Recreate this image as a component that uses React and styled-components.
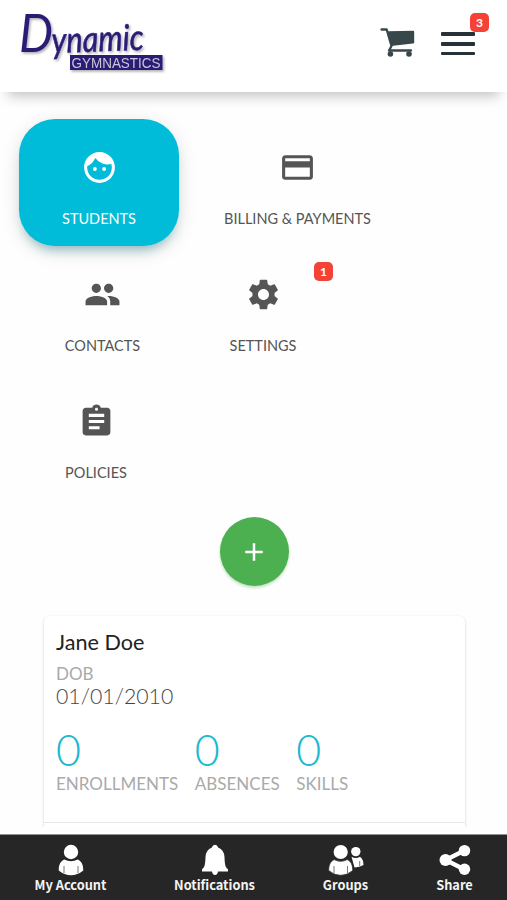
import React, { useState } from 'react';
import styled, { createGlobalStyle } from 'styled-components';
import { MdFace, MdPayment, MdPeople, MdSettings, MdAssignment, MdAdd } from 'react-icons/md';

const GlobalStyle = createGlobalStyle`
  * {
    box-sizing: border-box;
  }
  body {
    margin: 0;
    background-color: #fefefe;
    font-family: Lato, 'Open Sans', sans-serif;
  }
  button {
    padding: 0;
    border: none;
    background: none;
    font: inherit;
    color: inherit;
    cursor: pointer;
  }
  svg {
    display: block;
  }
`;

const Page = styled.div`
  display: flex;
  flex-direction: column;
  height: 900px;
  overflow: hidden;
`;

const Header = styled.header`
  position: relative;
  flex: 0 0 92px;
  display: flex;
  justify-content: space-between;
  align-items: flex-start;
  padding: 10px 32px 0 16px;
  background-color: #fff;
  box-shadow: 0 12px 12px -8px rgba(0, 0, 0, 0.24);
`;

const HeaderActions = styled.div`
  display: flex;
  align-items: flex-start;
  gap: 26px;
  padding-top: 17px;
`;

const MenuButton = styled.button`
  position: relative;
  display: flex;
  flex-direction: column;
  gap: 6px;
  width: 34px;
  padding-top: 5px;
  span {
    height: 3.8px;
    border-radius: 1px;
    background-color: #263238;
  }
`;

const Badge = styled.b`
  position: absolute;
  top: ${props => props.$top}px;
  right: ${props => props.$right}px;
  width: 19px;
  height: 19px;
  border-radius: 5px;
  background-color: #f44336;
  color: #fff;
  font-size: 12px;
  font-weight: 700;
  line-height: 19px;
  text-align: center;
`;

const Content = styled.main`
  flex: 0 0 735px;
  display: flex;
  flex-direction: column;
  padding-top: 27px;
  overflow: hidden;
`;

const Tabs = styled.nav`
  display: flex;
  flex-wrap: wrap;
  width: 420px;
  margin-left: 19px;
`;

const Tab = styled.button`
  position: relative;
  display: flex;
  flex-direction: column;
  align-items: center;
  width: ${props => props.$width}px;
  height: 127px;
  padding-top: 30px;
  border-radius: 36px;
  font-size: 14.5px;
  line-height: 20px;
  white-space: nowrap;
  color: ${props => (props.$active ? '#fff' : '#555')};
  ${props => props.$active && `
    background-color: #00bcd8;
    box-shadow: 0 5px 20px -1px rgba(0, 0, 0, 0.14), 0 9px 12px -6px rgba(0, 120, 140, 0.4);
  `}
  svg {
    width: 37px;
    height: 37px;
    margin-bottom: 23px;
  }
`;

const AddButton = styled.button`
  display: flex;
  align-items: center;
  justify-content: center;
  flex: 0 0 69px;
  width: 69px;
  margin: 17px 0 0 219.5px;
  border-radius: 50%;
  background-color: #4caf50;
  color: #fff;
  box-shadow: 0 2px 3px rgba(76, 175, 80, 0.35);
`;

const Card = styled.section`
  flex: 0 0 260px;
  width: 421px;
  margin: 30px 0 0 44px;
  border-radius: 6px;
  background-color: #fff;
  box-shadow: 0 1px 3px rgba(0, 0, 0, 0.18);
`;

const CardBody = styled.div`
  height: 207px;
  padding: 13px 12px 0;
  border-bottom: 1px solid #e6e8e8;
`;

const Name = styled.h2`
  margin: 0 0 9px;
  color: #222;
  font-size: 21.6px;
  font-weight: 400;
  line-height: 26px;
`;

const Label = styled.div`
  color: #aaa;
  font-size: 17px;
  line-height: 20px;
`;

const Birthday = styled.div`
  color: #444;
  font-size: 21.3px;
  font-weight: 300;
  line-height: 24px;
`;

const Stats = styled.div`
  display: flex;
  gap: 16.6px;
  margin-top: 18px;
`;

const Count = styled.div`
  color: #1cb8d0;
  font-size: 43px;
  font-weight: 300;
  line-height: 48px;
`;

const Footer = styled.footer`
  flex: 0 0 66px;
  display: flex;
  margin-top: auto;
  border-top: 1px solid #8d9292;
  background-color: #262626;
`;

const FooterItem = styled.button`
  display: flex;
  flex-direction: column;
  align-items: center;
  width: ${props => props.$width}px;
  padding-top: 9px;
  color: #f4f4f4;
  font-family: 'Noto Sans CJK SC', sans-serif;
  font-size: 12.8px;
  font-weight: 700;
  line-height: 18px;
`;

const Logo = () => (
  <svg width="155" height="72" viewBox="0 0 155 72" role="img" aria-label="Dynamic Gymnastics" overflow="visible">
    <defs>
      <filter id="logo-shadow" x="-10%" y="-10%" width="125%" height="130%">
        <feDropShadow dx="1.5" dy="1.8" stdDeviation="1" floodColor="#000" floodOpacity="0.3" />
      </filter>
    </defs>
    <g filter="url(#logo-shadow)" fill="#2b1d75">
      <g fontFamily="Lato, sans-serif" fontStyle="italic">
        <text x="3" y="41.5" fontSize="52" textLength="34" lengthAdjust="spacingAndGlyphs">D</text>
        <text
          x="36"
          y="43"
          fontSize="36"
          stroke="#2b1d75"
          strokeWidth="0.6"
          textLength="92"
          lengthAdjust="spacingAndGlyphs"
          transform="rotate(-2 36 43)"
        >
          ynamic
        </text>
      </g>
      <rect x="54" y="45" width="92.5" height="15" />
      <text
        x="55.5"
        y="57.8"
        fill="#c9c6d4"
        fontFamily="'Liberation Sans', sans-serif"
        fontSize="15.5"
        textLength="89"
        lengthAdjust="spacingAndGlyphs"
      >
        GYMNASTICS
      </text>
    </g>
  </svg>
);

const CartIcon = () => (
  <svg width="35" height="30" viewBox="0 0 35 30" fill="#37474a">
    <path d="M8 4.2 33 3.7q1.2 0 1.2 1.2v10.4q0 1.1-1.2 1.3L11 19Z" />
    <path d="M1.5 2.5h5.2L11.5 19 9 23.5h22" fill="none" stroke="#37474a" strokeWidth="2.3" strokeLinecap="round" strokeLinejoin="round" />
    <circle cx="10.4" cy="27" r="2.8" />
    <circle cx="29" cy="27" r="2.8" />
  </svg>
);

const AccountIcon = () => (
  <svg width="26" height="32" viewBox="0 0 26 32" fill="#fff">
    <circle cx="13" cy="8" r="7.2" />
    <path d="M6.2 15.5q6.8 3.5 13.6 0c3.8 2 5.5 5 5.5 11Q19.5 31.3 13 31.3T.7 26.5c0-6 1.7-9 5.5-11Z" />
    <path d="M6 22v7M20 22v7" stroke="#777" strokeWidth="1" />
  </svg>
);

const BellIcon = () => (
  <svg width="28" height="32" viewBox="0 0 28 32" fill="#fff">
    <path d="M10.9 3.5Q11.5.8 14 .8t3.1 2.7Q23.2 6 23.5 13c.2 7.5 1 10.8 3.5 12.2v2.4H17Q16.5 31 14 31t-3-3.4H1v-2.4C3.5 23.8 4.3 20.5 4.5 13q.3-7 6.4-9.5Z" />
  </svg>
);

const GroupsIcon = () => (
  <svg width="36" height="32" viewBox="0 0 36 32" fill="#fff">
    <circle cx="27.8" cy="7.6" r="4.7" />
    <path d="M23.5 12.8q4.3 2.4 8.5 0 3.5 2.5 3.5 8.2-3.7 2.4-9 2.4Z" />
    <path d="M31.7 17v5" stroke="#777" strokeWidth="1" />
    <circle cx="12.7" cy="8" r="7.1" />
    <path d="M6.2 15.6q6.5 3.5 13 0c3.9 2 5.5 5.2 5.5 11Q19.2 31.3 12.7 31.3T.7 26.6c0-5.8 1.7-9 5.5-11Z" stroke="#262626" strokeWidth="0.7" />
    <path d="M6 22v7M19.5 22v7" stroke="#777" strokeWidth="1" />
  </svg>
);

const ShareIcon = () => (
  <svg width="32" height="32" viewBox="0 0 32 32" fill="#fff">
    <path d="M25.5 6.5 6.5 16l19 9.5" fill="none" stroke="#fff" strokeWidth="4.2" />
    <circle cx="25.5" cy="6.6" r="5.7" />
    <circle cx="6.5" cy="16" r="6" />
    <circle cx="25.5" cy="25.3" r="5.7" />
  </svg>
);

const tabs = [
  { label: 'STUDENTS', icon: MdFace, width: 160 },
  { label: 'BILLING & PAYMENTS', icon: MdPayment, width: 237 },
  { label: 'CONTACTS', icon: MdPeople, width: 167 },
  { label: 'SETTINGS', icon: MdSettings, width: 154, badge: 1 },
  { label: 'POLICIES', icon: MdAssignment, width: 154 },
];

const stats = [
  { label: 'ENROLLMENTS', count: 0 },
  { label: 'ABSENCES', count: 0 },
  { label: 'SKILLS', count: 0 },
];

const footerItems = [
  { label: 'My Account', icon: AccountIcon, width: 141 },
  { label: 'Notifications', icon: BellIcon, width: 147 },
  { label: 'Groups', icon: GroupsIcon, width: 115 },
  { label: 'Share', icon: ShareIcon, width: 103 },
];

const App = () => {
  const [active, setActive] = useState('STUDENTS');

  return (
    <Page>
      <GlobalStyle />
      <Header>
        <Logo />
        <HeaderActions>
          <button><CartIcon /></button>
          <MenuButton>
            <span />
            <span />
            <span />
            <Badge $top={-14} $right={-14}>3</Badge>
          </MenuButton>
        </HeaderActions>
      </Header>
      <Content>
        <Tabs>
          {tabs.map(({ label, icon: TabIcon, width, badge }) => (
            <Tab key={label} $width={width} $active={label === active} onClick={() => setActive(label)}>
              <TabIcon />
              {label}
              {badge && <Badge $top={16} $right={7}>{badge}</Badge>}
            </Tab>
          ))}
        </Tabs>
        <AddButton>
          <MdAdd size={30} />
        </AddButton>
        <Card>
          <CardBody>
            <Name>Jane Doe</Name>
            <Label>DOB</Label>
            <Birthday>01/01/2010</Birthday>
            <Stats>
              {stats.map(({ label, count }) => (
                <div key={label}>
                  <Count>{count}</Count>
                  <Label>{label}</Label>
                </div>
              ))}
            </Stats>
          </CardBody>
        </Card>
      </Content>
      <Footer>
        {footerItems.map(({ label, icon: ItemIcon, width }) => (
          <FooterItem key={label} $width={width}>
            <ItemIcon />
            {label}
          </FooterItem>
        ))}
      </Footer>
    </Page>
  );
};

export default App;
